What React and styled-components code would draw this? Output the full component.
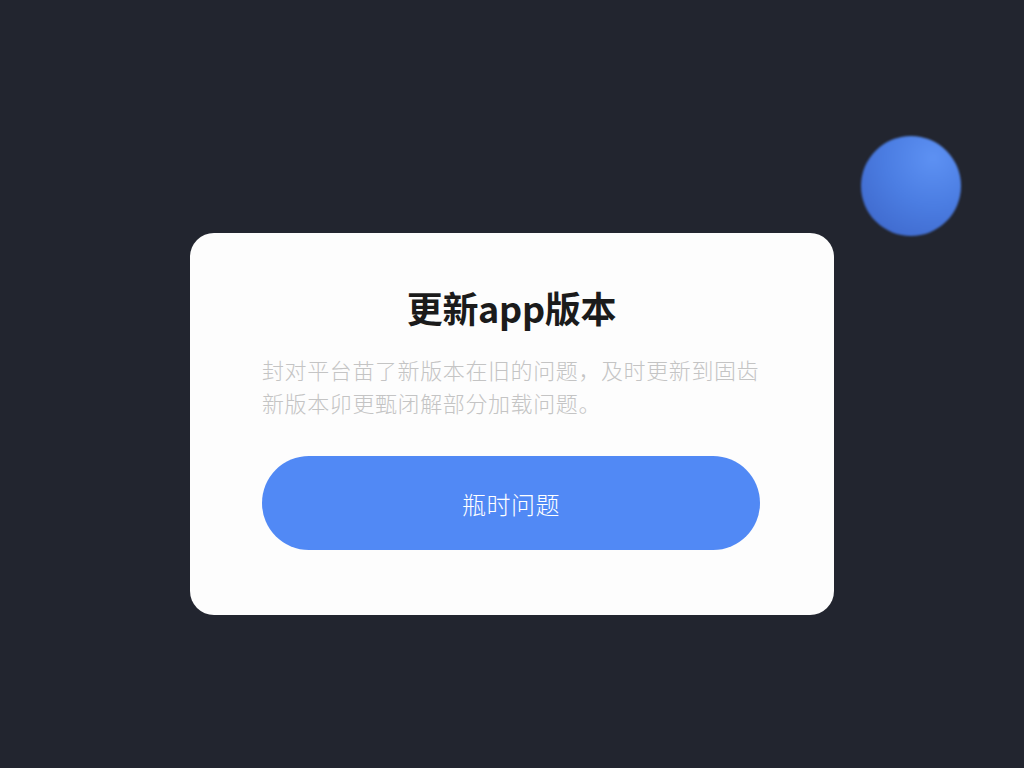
import React from "react"
import styled, { createGlobalStyle } from "styled-components"

const GlobalStyle = createGlobalStyle`
  html, body {
    margin: 0;
    padding: 0;
    background: #22252f;
  }
  body {
    font-family: "Noto Sans CJK SC", "Noto Sans", sans-serif;
  }
`

const Page = styled.div`
  position: relative;
  width: 1024px;
  height: 768px;
  overflow: hidden;
  background: #22252f;
  display: flex;
  justify-content: center;
  align-items: flex-start;
  padding-top: 233px;
  box-sizing: border-box;
`

const Orb = styled.div`
  position: absolute;
  left: 861px;
  top: 136px;
  width: 100px;
  height: 100px;
  border-radius: 50%;
  background: radial-gradient(circle at 72% 22%, #5d91f3 0%, #4b7de2 45%, #3b63c6 100%);
  filter: blur(0.8px);
`

const Card = styled.div`
  width: 644px;
  height: 382px;
  box-sizing: border-box;
  background: #fdfdfd;
  border-radius: 24px;
  padding: 53px 73px 0 72px;
  display: flex;
  flex-direction: column;
`

const Title = styled.h1`
  margin: 0;
  text-align: center;
  font-size: 36px;
  line-height: 42px;
  font-weight: 600;
  color: #1b1b1b;
  letter-spacing: -0.3px;
`

const Body = styled.p`
  margin: 25px 0 0;
  font-size: 22px;
  line-height: 33px;
  font-weight: 300;
  color: #c4c4c4;
  letter-spacing: 0.6px;
  white-space: nowrap;
`

const Button = styled.button`
  margin-top: 37px;
  height: 94px;
  width: 498px;
  border: none;
  border-radius: 47px;
  background: #5189f5;
  color: #ffffff;
  font-family: inherit;
  font-size: 24px;
  font-weight: 300;
  letter-spacing: 0.5px;
  display: flex;
  align-items: center;
  justify-content: center;
`

export default function App() {
  return (
    <>
      <GlobalStyle />
      <Page>
        <Orb />
        <Card>
          <Title>更新app版本</Title>
          <Body>
            封对平台苗了新版本在旧的问题，及时更新到固齿
            <br />
            新版本卯更甄闭解部分加载问题。
          </Body>
          <Button>瓶时问题</Button>
        </Card>
      </Page>
    </>
  )
}
